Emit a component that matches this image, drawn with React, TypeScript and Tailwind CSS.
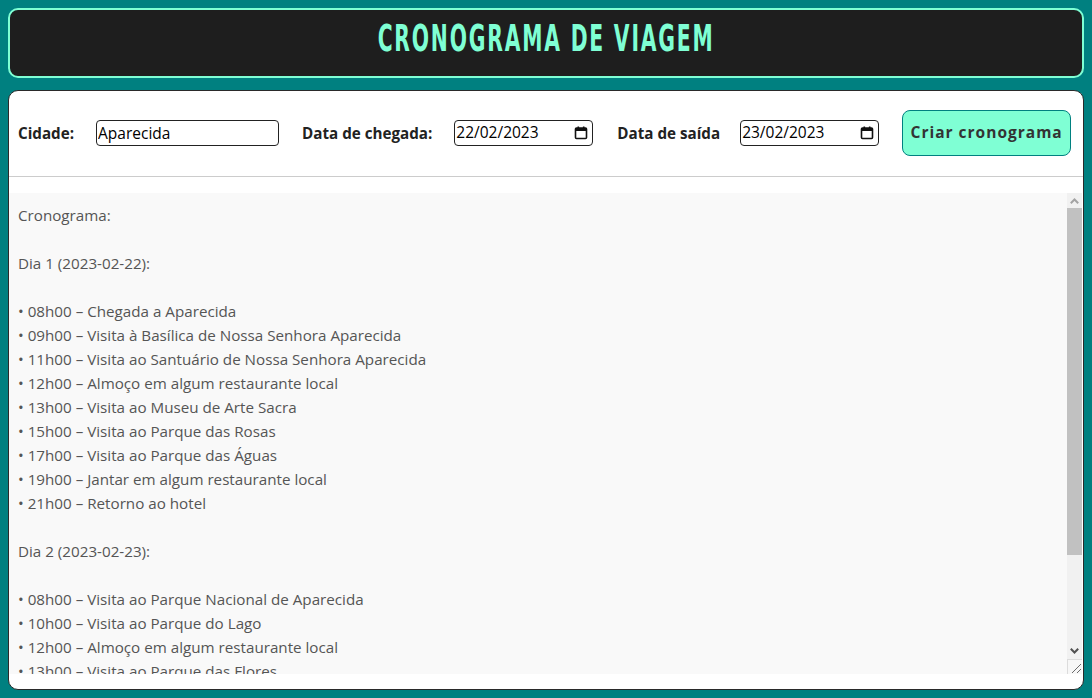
import React from "react";

const text = `Cronograma:

Dia 1 (2023-02-22):

• 08h00 – Chegada a Aparecida
• 09h00 – Visita à Basílica de Nossa Senhora Aparecida
• 11h00 – Visita ao Santuário de Nossa Senhora Aparecida
• 12h00 – Almoço em algum restaurante local
• 13h00 – Visita ao Museu de Arte Sacra
• 15h00 – Visita ao Parque das Rosas
• 17h00 – Visita ao Parque das Águas
• 19h00 – Jantar em algum restaurante local
• 21h00 – Retorno ao hotel

Dia 2 (2023-02-23):

• 08h00 – Visita ao Parque Nacional de Aparecida
• 10h00 – Visita ao Parque do Lago
• 12h00 – Almoço em algum restaurante local
• 13h00 – Visita ao Parque das Flores
• 15h00 – Visita ao Mirante do Cruzeiro
• 17h00 – Compras de lembranças
• 19h00 – Jantar em algum restaurante local
• 21h00 – Retorno ao hotel`;

function CalendarIcon() {
  return (
    <svg width="14" height="14" viewBox="0 0 14 14" className="shrink-0">
      <rect x="1.5" y="2" width="11" height="10.5" rx="1" fill="none" stroke="#111" strokeWidth="1.6" />
      <rect x="1.5" y="2" width="11" height="3" fill="#111" />
      <rect x="3.5" y="0.5" width="1.6" height="2.5" fill="#111" />
      <rect x="8.9" y="0.5" width="1.6" height="2.5" fill="#111" />
    </svg>
  );
}

function DateBox({ value }: { value: string }) {
  return (
    <div className="flex h-[26px] w-[139px] shrink-0 items-center justify-between rounded-[4px] border border-[#222] bg-white pl-[1px] pr-[4px] text-[15.5px] text-black">
      <span>{value}</span>
      <CalendarIcon />
    </div>
  );
}

function Chevron({ up, color }: { up?: boolean; color: string }) {
  return (
    <svg width="9" height="6" viewBox="0 0 9 6">
      <path
        d={up ? "M0.8 5.2 L4.5 1.5 L8.2 5.2" : "M0.8 0.8 L4.5 4.5 L8.2 0.8"}
        fill="none"
        stroke={color}
        strokeWidth="2"
      />
    </svg>
  );
}

function FakeScrollbar() {
  return (
    <div className="flex w-[15px] shrink-0 flex-col bg-[#f1f1f1]">
      <div className="flex h-[15px] items-center justify-center">
        <Chevron up color="#a3a3a3" />
      </div>
      <div className="h-[347px] bg-[#c1c1c1]" />
      <div className="flex-1" />
      <div className="flex h-[15px] items-center justify-center">
        <Chevron color="#505050" />
      </div>
      <div className="mt-[1px] flex h-[15px] items-end justify-end border-l border-t border-[#dcdcdc] bg-[#f7f7f7]">
        <svg width="13" height="13" viewBox="0 0 13 13">
          <path d="M12 3 L3 12 M12 8 L8 12" stroke="#6b6b6b" strokeWidth="1" />
        </svg>
      </div>
    </div>
  );
}

export default function App() {
  return (
    <div
      className="flex h-[698px] w-[1092px] flex-col gap-[12px] bg-[#008080] p-[8px]"
      style={{ fontFamily: '"Open Sans", "Noto Sans", sans-serif' }}
    >
      <div className="flex h-[70px] items-center justify-center rounded-[10px] border-2 border-[#7fffd4] bg-[#1e1e1e] pb-[10px]">
        <h1
          className="inline-block scale-x-[0.595] text-[38px] font-bold leading-[40px] tracking-[3px] text-[#7fffd4]"
          style={{ fontFamily: '"DejaVu Sans Condensed", "DejaVu Sans", sans-serif' }}
        >
          CRONOGRAMA DE VIAGEM
        </h1>
      </div>
      <div className="flex flex-1 flex-col rounded-[10px] border border-[#2a2a2a] bg-white">
        <div className="flex items-center whitespace-nowrap px-[9px] pt-[19px] pb-[20px]">
          <label className="shrink-0 text-[15.2px] font-bold text-[#222]">Cidade:</label>
          <input
            readOnly
            value="Aparecida"
            className="ml-[22px] h-[26px] w-[183px] shrink-0 rounded-[4px] border border-[#222] px-[1px] text-[15.5px] text-black outline-none"
          />
          <label className="ml-[23px] shrink-0 text-[15.2px] font-bold text-[#222]">Data de chegada:</label>
          <div className="ml-[22px]">
            <DateBox value="22/02/2023" />
          </div>
          <label className="ml-[24px] shrink-0 text-[15.2px] font-bold text-[#222]">Data de saída</label>
          <div className="ml-[20px]">
            <DateBox value="23/02/2023" />
          </div>
          <button className="ml-[23px] h-[46px] w-[169px] shrink-0 rounded-[8px] border border-[#008080] bg-[#7fffd4] text-[15.5px] font-bold tracking-[1px] text-[#333]">
            Criar cronograma
          </button>
        </div>
        <div className="h-px bg-[#cccccc]" />
        <div className="flex flex-1 flex-col pt-[16px] pb-[15px] pr-[1px]">
          <div className="flex flex-1 overflow-hidden bg-[#f9f9f9]">
            <textarea
              readOnly
              value={text}
              className="flex-1 resize-none overflow-hidden bg-[#f9f9f9] px-[9px] pt-[10px] text-[15.2px] leading-[24px] text-[#555] outline-none"
            />
            <FakeScrollbar />
          </div>
        </div>
      </div>
    </div>
  );
}
